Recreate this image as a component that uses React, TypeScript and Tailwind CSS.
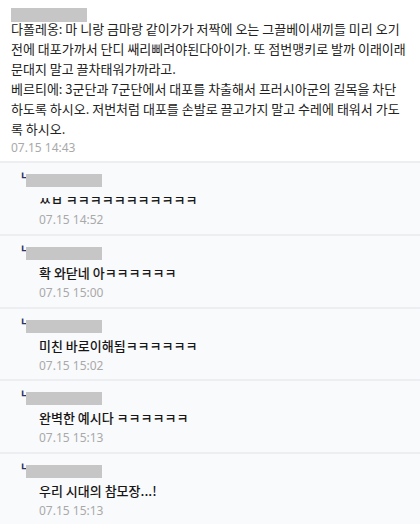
import React from "react";

const ko = { fontFamily: '"Noto Sans CJK KR", "Noto Sans", sans-serif' };
const num = { fontFamily: '"Noto Sans", "Liberation Sans", sans-serif' };

const postLines = [
  "다폴레옹: 마 니랑 금마랑 같이가가 저짝에 오는 그끌베이새끼들 미리 오기",
  "전에 대포가까서 단디 쌔리삐려야된다아이가. 또 점번맹키로 발까 이래이래",
  "문대지 말고 끌차태워가까라고.",
  "베르티에: 3군단과 7군단에서 대포를 차출해서 프러시아군의 길목을 차단",
  "하도록 하시오. 저번처럼 대포를 손발로 끌고가지 말고 수레에 태워서 가도",
  "록 하시오.",
];

const replies = [
  { text: "ㅆㅂ ㅋㅋㅋㅋㅋㅋㅋㅋㅋㅋㅋ", time: "07.15 14:52" },
  { text: "확 와닫네 아ㅋㅋㅋㅋㅋㅋ", time: "07.15 15:00" },
  { text: "미친 바로이해됨ㅋㅋㅋㅋㅋㅋ", time: "07.15 15:02" },
  { text: "완벽한 예시다 ㅋㅋㅋㅋㅋㅋ", time: "07.15 15:13" },
  { text: "우리 시대의 참모장...!", time: "07.15 15:13" },
];

function Reply({ text, time }: { text: string; time: string }) {
  return (
    <div className="border-t-2 border-[#eceef2] bg-[#f9fafc] pl-[20px] pt-[11px] pb-[4.75px]">
      {/* 닉네임 (가려짐) */}
      <div className="flex h-[13px] items-start">
        <span
          className="-mt-[4px] text-[11px] font-bold leading-[11px] text-[#2f3266]"
          style={ko}
        >
          ㄴ
        </span>
        <div className="ml-[-4px] h-[13px] w-[76px] bg-[#c6c6c6]" />
      </div>
      <div className="pl-[19px]">
        <p
          className="mt-[3px] text-[13px] font-medium leading-[20px] text-[#161616]"
          style={ko}
        >
          {text}
        </p>
        <p className="mt-[1px] text-[12px] leading-[18px] text-[#a9a9a9]" style={num}>
          {time}
        </p>
      </div>
    </div>
  );
}

export default function App() {
  return (
    <div className="h-[524px] w-[420px] overflow-hidden bg-[#f9fafc]">
      {/* 본문 */}
      <div className="bg-white px-[11px] pt-[8px] pb-[4px]">
        <div className="h-[14px] w-[76px] bg-[#c6c6c6]" />
        <div className="mt-[-3px] text-[13px] leading-[20px] text-[#222]" style={ko}>
          {postLines.map((l) => (
            <div key={l} className="whitespace-nowrap">
              {l}
            </div>
          ))}
        </div>
        <p className="text-[12px] leading-[18px] text-[#a9a9a9]" style={num}>
          07.15 14:43
        </p>
      </div>

      {replies.map((r, i) => (
        <Reply key={i} {...r} />
      ))}
    </div>
  );
}
